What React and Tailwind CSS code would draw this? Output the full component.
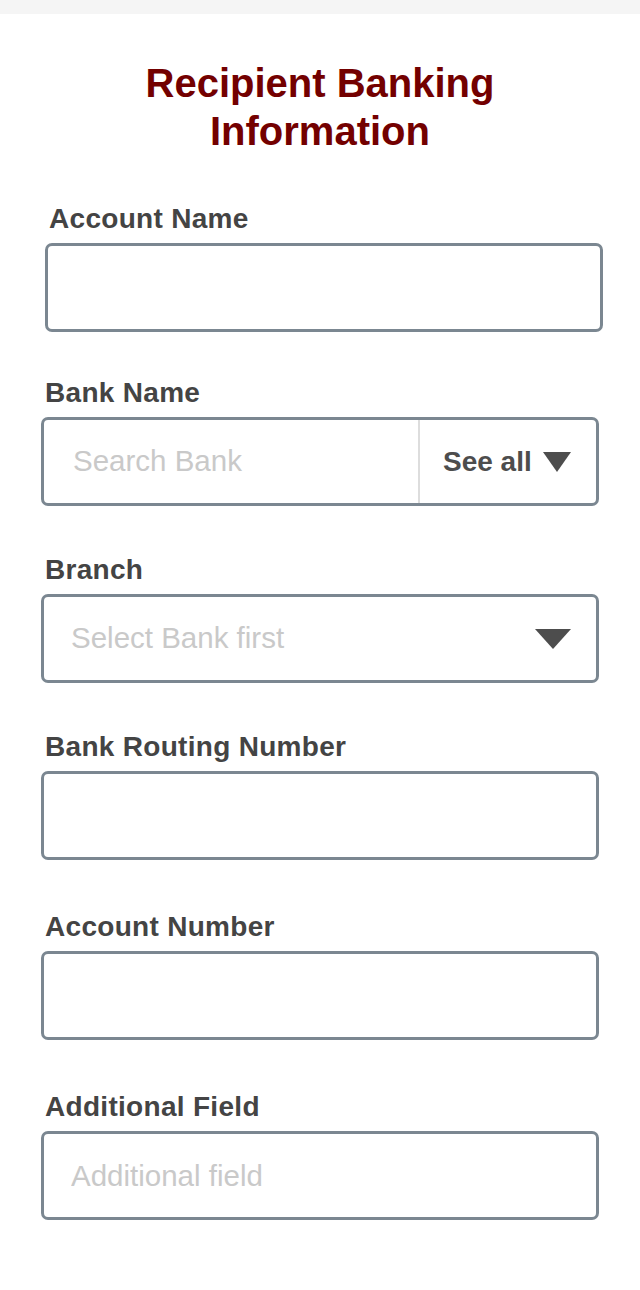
import { useState } from 'react'

const font = { fontFamily: '"Liberation Sans", Arial, sans-serif' }

function Label({ children }) {
  return (
    <label className="mb-[8px] block pl-[4px] text-[28px] font-bold leading-[32px] tracking-[0.3px] text-[#444444]">
      {children}
    </label>
  )
}

function Caret({ className }) {
  return (
    <svg viewBox="0 0 36 20" preserveAspectRatio="none" className={className} aria-hidden="true">
      <path d="M0 0 H36 L18 20 Z" fill="#4d4d4d" />
    </svg>
  )
}

function TextField({ label, placeholder, className = '' }) {
  const [value, setValue] = useState('')
  return (
    <div className={className}>
      <Label>{label}</Label>
      <input
        type="text"
        value={value}
        onChange={(e) => setValue(e.target.value)}
        placeholder={placeholder}
        className="block h-[89px] w-full rounded-[7px] border-[3px] border-[#7b8791] bg-white px-[27px] text-[29.5px] text-[#333] outline-none placeholder:text-[#c9c9c9]"
        style={font}
      />
    </div>
  )
}

export default function App() {
  const [bank, setBank] = useState('')

  return (
    <div className="min-h-[1290px] bg-white" style={font}>
      <div className="h-[14px] bg-[#f5f5f5]" />

      <div className="px-[41px] pb-[70px]">
        <h1 className="mt-[45px] text-center text-[40px] font-bold leading-[48px] text-[#730000]">
          Recipient Banking
          <br />
          Information
        </h1>

        <TextField label="Account Name" className="mt-[48px] ml-[4px] -mr-[4px]" />

        <div className="mt-[45px]">
          <Label>Bank Name</Label>
          <div className="flex h-[89px] w-full overflow-hidden rounded-[7px] border-[3px] border-[#7b8791] bg-white">
            <input
              type="text"
              value={bank}
              onChange={(e) => setBank(e.target.value)}
              placeholder="Search Bank"
              className="min-w-0 flex-1 bg-transparent pl-[29px] text-[29.5px] text-[#333] outline-none placeholder:text-[#c9c9c9]"
              style={font}
            />
            <button
              type="button"
              className="flex w-[178px] shrink-0 items-center gap-[11px] border-l-[2px] border-[#dddddd] pl-[23px] text-[28px] font-bold text-[#4d4d4d]"
              style={font}
            >
              See all
              <Caret className="h-[20px] w-[28px]" />
            </button>
          </div>
        </div>

        <div className="mt-[48px]">
          <Label>Branch</Label>
          <button
            type="button"
            className="flex h-[89px] w-full items-center justify-between rounded-[7px] border-[3px] border-[#7b8791] bg-white pl-[27px] pr-[25px] text-left text-[29.5px] text-[#c9c9c9]"
            style={font}
          >
            <span>Select Bank first</span>
            <Caret className="h-[20px] w-[36px]" />
          </button>
        </div>

        <TextField label="Bank Routing Number" className="mt-[48px]" />
        <TextField label="Account Number" className="mt-[51px]" />
        <TextField label="Additional Field" placeholder="Additional field" className="mt-[51px]" />
      </div>
    </div>
  )
}
